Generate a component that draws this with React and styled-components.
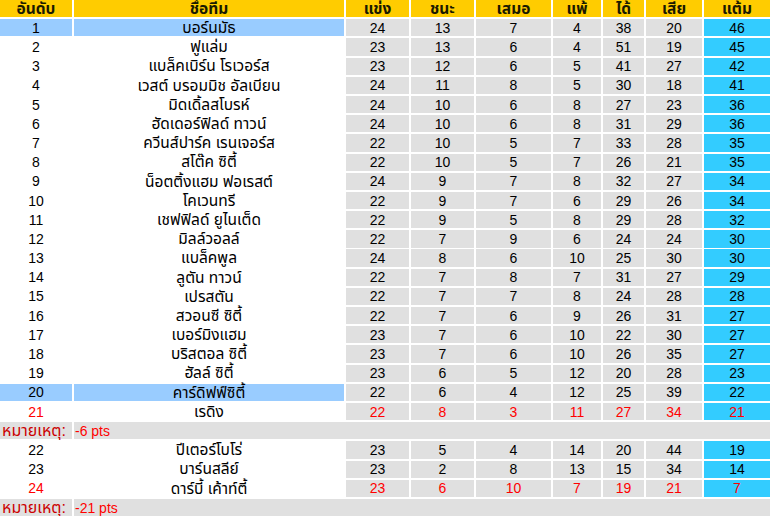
import React from 'react';
import styled, { createGlobalStyle } from 'styled-components';

const COLS = '72px 270px 63px 63px 75px 48px 41px 56px 66px';

const teams = [
  [1, 'บอร์นมัธ', 24, 13, 7, 4, 38, 20, 46, 'top'],
  [2, 'ฟูแล่ม', 23, 13, 6, 4, 51, 19, 45],
  [3, 'แบล็คเบิร์น โรเวอร์ส', 23, 12, 6, 5, 41, 27, 42],
  [4, 'เวสต์ บรอมมิช อัลเบียน', 24, 11, 8, 5, 30, 18, 41],
  [5, 'มิดเดิ้ลสโบรห์', 24, 10, 6, 8, 27, 23, 36],
  [6, 'ฮัดเดอร์ฟิลด์ ทาวน์', 24, 10, 6, 8, 31, 29, 36],
  [7, 'ควีนส์ปาร์ค เรนเจอร์ส', 22, 10, 5, 7, 33, 28, 35],
  [8, 'สโต๊ค ซิตี้', 22, 10, 5, 7, 26, 21, 35],
  [9, 'น็อตติ้งแฮม ฟอเรสต์', 24, 9, 7, 8, 32, 27, 34],
  [10, 'โคเวนทรี', 22, 9, 7, 6, 29, 26, 34],
  [11, 'เชฟฟิลด์ ยูไนเต็ด', 22, 9, 5, 8, 29, 28, 32],
  [12, 'มิลล์วอลล์', 22, 7, 9, 6, 24, 24, 30],
  [13, 'แบล็คพูล', 24, 8, 6, 10, 25, 30, 30],
  [14, 'ลูตัน ทาวน์', 22, 7, 8, 7, 31, 27, 29],
  [15, 'เปรสตัน', 22, 7, 7, 8, 24, 28, 28],
  [16, 'สวอนซี ซิตี้', 22, 7, 6, 9, 26, 31, 27],
  [17, 'เบอร์มิงแฮม', 23, 7, 6, 10, 22, 30, 27],
  [18, 'บริสตอล ซิตี้', 23, 7, 6, 10, 26, 35, 27],
  [19, 'ฮัลล์ ซิตี้', 23, 6, 5, 12, 20, 28, 23],
  [20, 'คาร์ดิฟฟ์ซิตี้', 22, 6, 4, 12, 25, 39, 22, 'top'],
  [21, 'เรดิง', 22, 8, 3, 11, 27, 34, 21, 'red', '-6 pts'],
  [22, 'ปีเตอร์โบโร่', 23, 5, 4, 14, 20, 44, 19],
  [23, 'บาร์นสลีย์', 23, 2, 8, 13, 15, 34, 14],
  [24, 'ดาร์บี้ เค้าท์ตี้', 23, 6, 10, 7, 19, 21, 7, 'red', '-21 pts'],
];

const headers = ['อันดับ', 'ชื่อทีม', 'แข่ง', 'ชนะ', 'เสมอ', 'แพ้', 'ได้', 'เสีย', 'แต้ม'];

const GlobalStyle = createGlobalStyle`
  body {
    margin: 0;
    background: #ffffff;
    font-family: "Liberation Sans", "Noto Sans Thai", "Noto Sans", sans-serif;
  }
`;

const Table = styled.div`
  display: flex;
  flex-direction: column;
  gap: 1.95px;
  width: 770px;
  overflow: hidden;
`;

const Row = styled.div`
  display: grid;
  grid-template-columns: ${COLS};
  column-gap: 2px;
  height: 17.25px;
`;

const Cell = styled.div`
  display: flex;
  align-items: center;
  justify-content: center;
  font-size: ${(p) => (p.$thai ? '15.5px' : '14px')};
  line-height: 1;
  white-space: nowrap;
  background: ${(p) => p.$bg || 'transparent'};
  color: ${(p) => (p.$red ? '#ff0000' : '#000000')};
`;

const HeadCell = styled(Cell)`
  background: #ffcc00;
  font-weight: bold;
  font-size: 15.5px;
  color: #1a1a00;
`;

const NoteRow = styled.div`
  display: grid;
  grid-template-columns: 72px 1fr;
  column-gap: 2px;
  height: 17.25px;
`;

const NoteCell = styled.div`
  display: flex;
  align-items: center;
  padding-left: ${(p) => (p.$label ? '2px' : '1px')};
  background: #e0e0e0;
  font-size: ${(p) => (p.$label ? '16px' : '14px')};
  line-height: 1;
  white-space: nowrap;
  color: ${(p) => (p.$label ? '#cc0000' : '#ff0000')};
`;

const TeamRow = ({ team }) => {
  const [rank, name, ...rest] = team;
  const stats = rest.slice(0, 7);
  const flag = rest[7];
  const top = flag === 'top';
  const red = flag === 'red';
  return (
    <Row>
      <Cell $bg={top ? '#99ccff' : '#ffffff'} $red={red}>{rank}</Cell>
      <Cell $bg={top ? '#99ccff' : '#ffffff'} $thai>{name}</Cell>
      {stats.map((v, i) => (
        <Cell key={i} $bg={i === 6 ? '#33ccff' : '#e0e0e0'} $red={red}>
          {v}
        </Cell>
      ))}
    </Row>
  );
};

export default function App() {
  return (
    <>
      <GlobalStyle />
      <Table>
        <Row>
          {headers.map((h) => (
            <HeadCell key={h}>{h}</HeadCell>
          ))}
        </Row>
        {teams.map((t) => (
          <React.Fragment key={t[0]}>
            <TeamRow team={t} />
            {t[10] && (
              <NoteRow>
                <NoteCell $label>หมายเหตุ:</NoteCell>
                <NoteCell>{t[10]}</NoteCell>
              </NoteRow>
            )}
          </React.Fragment>
        ))}
      </Table>
    </>
  );
}
